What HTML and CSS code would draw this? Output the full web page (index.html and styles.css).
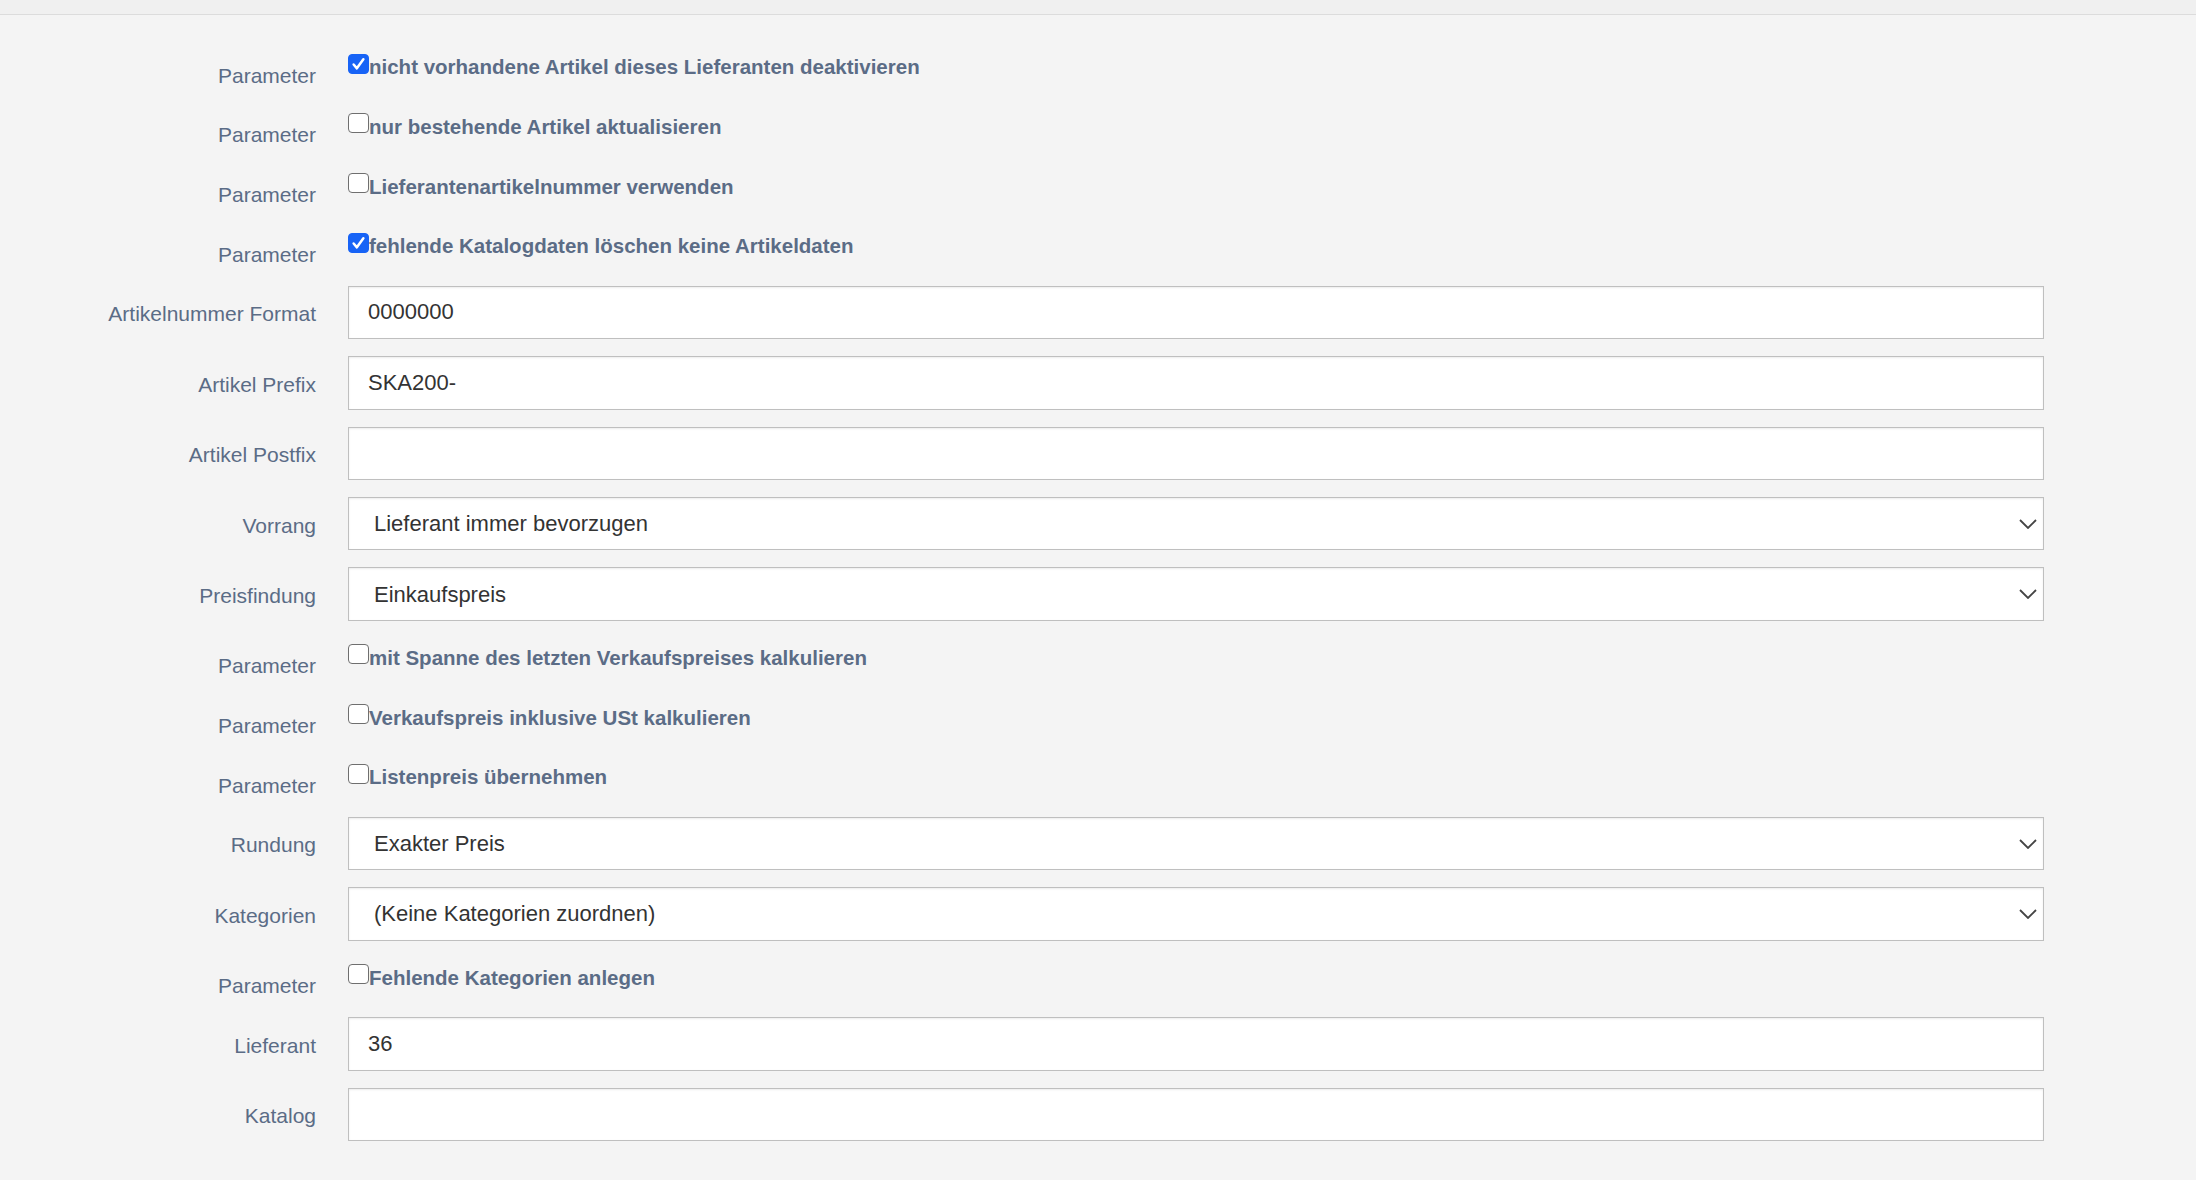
FILE: index.html
```html
<!DOCTYPE html>
<html lang="de">
<head>
  <meta charset="UTF-8" />
  <meta name="viewport" content="width=device-width, initial-scale=1.0"/>
  <title>Katalog Import | Einstellungen</title>
  <link rel="stylesheet" href="styles.css">
</head>
<body>

  <!-- top strip -->
  <div class="topbar"></div>

  <form class="settings">

    <div class="row check-row">
      <label class="label">Parameter</label>
      <label class="check"><span class="box on"><svg viewBox="0 0 20 20"><path d="M4.6 10.6 L8.2 14.8 L15.4 4.8"/></svg></span>nicht vorhandene Artikel dieses Lieferanten deaktivieren</label>
    </div>
    <div class="row check-row">
      <label class="label">Parameter</label>
      <label class="check"><span class="box"></span>nur bestehende Artikel aktualisieren</label>
    </div>
    <div class="row check-row">
      <label class="label">Parameter</label>
      <label class="check"><span class="box"></span>Lieferantenartikelnummer verwenden</label>
    </div>
    <div class="row check-row">
      <label class="label">Parameter</label>
      <label class="check"><span class="box on"><svg viewBox="0 0 20 20"><path d="M4.6 10.6 L8.2 14.8 L15.4 4.8"/></svg></span>fehlende Katalogdaten löschen keine Artikeldaten</label>
    </div>

    <div class="row">
      <label class="label">Artikelnummer Format</label>
      <input class="field" type="text" value="0000000">
    </div>
    <div class="row">
      <label class="label">Artikel Prefix</label>
      <input class="field" type="text" value="SKA200-">
    </div>
    <div class="row">
      <label class="label">Artikel Postfix</label>
      <input class="field" type="text" value="">
    </div>
    <div class="row">
      <label class="label">Vorrang</label>
      <div class="select-wrap">
        <select class="field select"><option>Lieferant immer bevorzugen</option></select>
        <svg class="chevron" viewBox="0 0 18 10"><path d="M1 1 L9 9 L17 1"/></svg>
      </div>
    </div>
    <div class="row">
      <label class="label">Preisfindung</label>
      <div class="select-wrap">
        <select class="field select"><option>Einkaufspreis</option></select>
        <svg class="chevron" viewBox="0 0 18 10"><path d="M1 1 L9 9 L17 1"/></svg>
      </div>
    </div>

    <div class="row check-row">
      <label class="label">Parameter</label>
      <label class="check"><span class="box"></span>mit Spanne des letzten Verkaufspreises kalkulieren</label>
    </div>
    <div class="row check-row">
      <label class="label">Parameter</label>
      <label class="check"><span class="box"></span>Verkaufspreis inklusive USt kalkulieren</label>
    </div>
    <div class="row check-row">
      <label class="label">Parameter</label>
      <label class="check"><span class="box"></span>Listenpreis übernehmen</label>
    </div>

    <div class="row">
      <label class="label">Rundung</label>
      <div class="select-wrap">
        <select class="field select"><option>Exakter Preis</option></select>
        <svg class="chevron" viewBox="0 0 18 10"><path d="M1 1 L9 9 L17 1"/></svg>
      </div>
    </div>
    <div class="row">
      <label class="label">Kategorien</label>
      <div class="select-wrap">
        <select class="field select"><option>(Keine Kategorien zuordnen)</option></select>
        <svg class="chevron" viewBox="0 0 18 10"><path d="M1 1 L9 9 L17 1"/></svg>
      </div>
    </div>

    <div class="row check-row">
      <label class="label">Parameter</label>
      <label class="check"><span class="box"></span>Fehlende Kategorien anlegen</label>
    </div>

    <div class="row">
      <label class="label">Lieferant</label>
      <input class="field" type="text" value="36">
    </div>
    <div class="row">
      <label class="label">Katalog</label>
      <input class="field" type="text" value="">
    </div>

  </form>

</body>
</html>
```

FILE: styles.css
```css
* {
  box-sizing: border-box;
}

body {
  margin: 0;
  font-family: 'Liberation Sans', Arial, sans-serif;
  background: #f4f4f4;
  color: #333;
}

.topbar {
  height: 15px;
  background: #f0f0f0;
  border-bottom: 1px solid #dcdcdc;
}

.settings {
  padding-top: 32px;
  width: 2044px;
}

.row {
  display: grid;
  grid-template-columns: 316px 1696px;
  column-gap: 32px;
  margin-bottom: 17px;
}

.check-row {
  height: 42.7px;
}

.label {
  text-align: right;
  font-size: 21px;
  line-height: 24px;
  padding-top: 16.7px;
  color: #5b6c86;
}

.check {
  display: flex;
  align-items: flex-start;
  padding-top: 10.2px;
  font-size: 20.5px;
  font-weight: bold;
  line-height: 20px;
  color: #5b6c86;
}

.check .box {
  flex: none;
  width: 21px;
  height: 20px;
  margin-top: -3.7px;
  border: 1px solid #6f6f6f;
  border-radius: 4px;
  background: #fff;
}

.check .box.on {
  background: #1763f6;
  border-color: #1763f6;
}

.check .box svg {
  display: block;
  width: 19px;
  height: 18px;
}

.check .box svg path {
  fill: none;
  stroke: #fff;
  stroke-width: 2.8;
  stroke-linecap: round;
  stroke-linejoin: round;
}

.field {
  display: block;
  width: 100%;
  height: 53.4px;
  margin: 0;
  padding: 0 19px;
  font-family: inherit;
  font-size: 22px;
  color: #333;
  background: #fff;
  border: 1px solid #bfbfbf;
  border-radius: 0;
  box-shadow: inset 0 1px 2px rgba(0, 0, 0, 0.08);
  outline: none;
}

.select-wrap {
  position: relative;
}

.select {
  appearance: none;
  -webkit-appearance: none;
  padding-left: 25px;
  padding-right: 40px;
}

.chevron {
  position: absolute;
  right: 7px;
  top: 22px;
  width: 18px;
  height: 10px;
  pointer-events: none;
}

.chevron path {
  fill: none;
  stroke: #444;
  stroke-width: 1.8;
}
```
